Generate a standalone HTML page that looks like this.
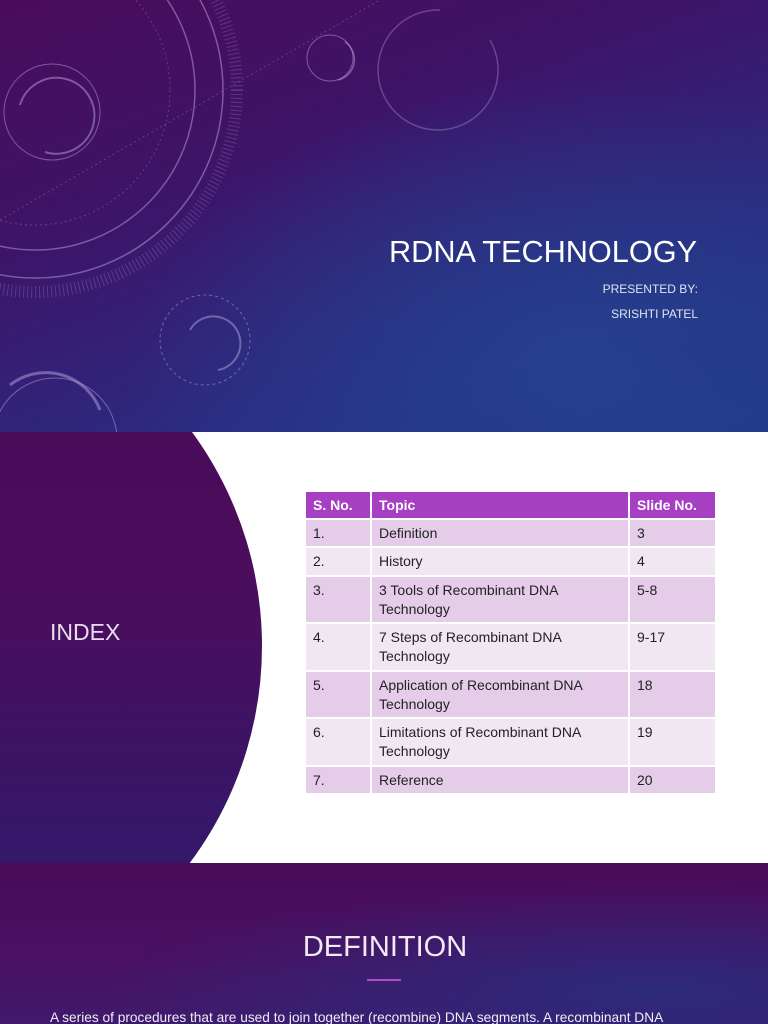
<!DOCTYPE html>
<html><head><meta charset="utf-8"><style>
*{margin:0;padding:0;box-sizing:border-box}
body{width:768px;height:1024px;overflow:hidden;font-family:"Liberation Sans",sans-serif;background:#fff;position:relative}
.s1{position:absolute;left:0;top:0;width:768px;height:432px;overflow:hidden;
background:radial-gradient(ellipse at 75% 85%,#25408e 0%,rgba(37,64,142,0) 55%),linear-gradient(160deg,#4a0c5a 0%,#3d1468 35%,#2c2a80 70%,#1f3a8a 100%)}
.s2{position:absolute;left:0;top:432px;width:768px;height:431px;overflow:hidden;background:#fff}
.circ{position:absolute;left:-462px;top:-148px;width:724px;height:724px;border-radius:50%;
background:linear-gradient(180deg,#4a0a55 0%,#4a0e5e 45%,#33186a 80%,#2a2070 100%)}
.s3{position:absolute;left:0;top:863px;width:768px;height:161px;overflow:hidden;
background:radial-gradient(ellipse at 85% 80%,#2c2a7a 0%,rgba(44,42,122,0) 60%),linear-gradient(180deg,#480c58 0%,#4a1062 60%,#3f1a6c 100%)}
.t{position:absolute;color:#fff}
table{position:absolute;left:304px;top:490px;border-collapse:collapse;width:413px;font-size:14px;color:#222}
td{border:2px solid #fff;padding:4px 7px 0;vertical-align:top;line-height:19px}
tr.h td{background:#a63fc2;color:#fff;font-weight:bold;height:28px;padding-top:4px}
tr.a td{background:#e5cdea}
tr.b td{background:#f1e7f3}
</style></head><body>
<div class="s1">
<svg width="768" height="432" style="position:absolute;left:0;top:0" fill="none" stroke="#b9a3dc" stroke-opacity=".5">
<circle cx="35" cy="90" r="160" stroke-width="1.5"/>
<circle cx="35" cy="90" r="188" stroke-width="1.5"/>
<circle cx="35" cy="90" r="202" stroke-width="12" stroke-dasharray="1 3" stroke-opacity=".25"/>
<circle cx="35" cy="90" r="135" stroke-dasharray="2 3" stroke-opacity=".3"/>
<circle cx="52" cy="112" r="48" stroke-width="1"/>
<path d="M20 105 A38 38 0 1 1 45 152" stroke-width="2"/>
<circle cx="330" cy="58" r="23"/>
<path d="M345 42 A21 21 0 0 1 338 80" stroke-width="1.5"/>
<circle cx="205" cy="340" r="45" stroke-dasharray="3 3"/>
<path d="M190 330 A27 27 0 1 1 218 370" stroke-width="2"/>
<circle cx="55" cy="440" r="62"/>
<path d="M10 385 A58 58 0 0 1 100 410" stroke-width="3"/>
<line x1="0" y1="220" x2="380" y2="0" stroke-dasharray="2 3" stroke-opacity=".3"/>
<path d="M440 10 A60 60 0 1 0 490 40" stroke-width="1.5" stroke-opacity=".35"/>
</svg>
<div class="t" style="left:389px;top:234px;font-size:30.7px;font-weight:300">RDNA TECHNOLOGY</div>
<div class="t" style="right:70px;top:282px;font-size:12px;color:#dfe3f2">PRESENTED BY:</div>
<div class="t" style="right:70px;top:307px;font-size:12px;color:#dfe3f2">SRISHTI PATEL</div>
</div>
<div class="s2"><div class="circ"></div>
<div class="t" style="left:50px;top:187px;font-size:23px;color:#e8dcef">INDEX</div>
</div>
<table>
<tr class="h"><td style="width:66px">S. No.</td><td style="width:258px">Topic</td><td>Slide No.</td></tr>
<tr class="a"><td style="height:28px">1.</td><td>Definition</td><td>3</td></tr>
<tr class="b"><td style="height:29px">2.</td><td>History</td><td>4</td></tr>
<tr class="a"><td style="height:47px">3.</td><td>3 Tools of Recombinant DNA Technology</td><td>5-8</td></tr>
<tr class="b"><td style="height:48px">4.</td><td>7 Steps of Recombinant DNA Technology</td><td>9-17</td></tr>
<tr class="a"><td style="height:47px">5.</td><td>Application of Recombinant DNA Technology</td><td>18</td></tr>
<tr class="b"><td style="height:48px">6.</td><td>Limitations of Recombinant DNA Technology</td><td>19</td></tr>
<tr class="a"><td style="height:28px">7.</td><td>Reference</td><td>20</td></tr>
</table>
<div class="s3">
<div class="t" style="left:0;width:770px;text-align:center;top:68px;font-size:29px;font-weight:300;color:#f2eaf6">DEFINITION</div>
<div style="position:absolute;left:367px;top:116px;width:34px;height:2px;background:#b04dc7"></div>
<div class="t" style="left:50px;top:147px;font-size:13.7px;white-space:nowrap;color:#f2ecf6">A series of procedures that are used to join together (recombine) DNA segments. A recombinant DNA</div>
</div>
</body></html>
